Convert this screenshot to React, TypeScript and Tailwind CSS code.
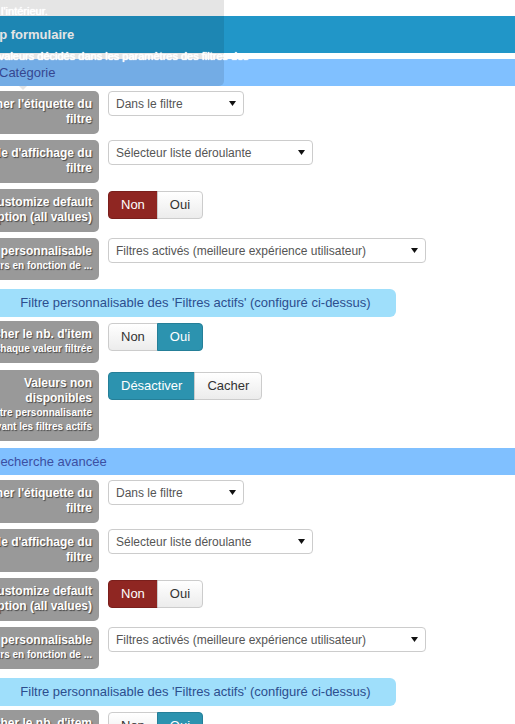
import type { ReactNode } from "react"

type Row =
  | { kind: "select"; lines: string[]; small?: string[]; value: string; width: string }
  | { kind: "toggle"; lines: string[]; small?: string[]; options: string[]; active: number; tone: "red" | "teal" }

const ROWS_TOP: Row[] = [
  { kind: "select", lines: ["Positionner l'étiquette du", "filtre"], value: "Dans le filtre", width: "w-[136px]" },
  { kind: "select", lines: ["Mode d'affichage du", "filtre"], value: "Sélecteur liste déroulante", width: "w-[205px]" },
  { kind: "toggle", lines: ["Customize default", "option (all values)"], options: ["Non", "Oui"], active: 0, tone: "red" },
  {
    kind: "select",
    lines: ["Filtre personnalisable"],
    small: ["Valeurs en fonction de ..."],
    value: "Filtres activés (meilleure expérience utilisateur)",
    width: "w-[318px]",
  },
]

const ROWS_BOTTOM: Row[] = [
  {
    kind: "toggle",
    lines: ["Afficher le nb. d'item"],
    small: ["pour chaque valeur filtrée"],
    options: ["Non", "Oui"],
    active: 1,
    tone: "teal",
  },
  {
    kind: "toggle",
    lines: ["Valeurs non", "disponibles"],
    small: ["Selon filtre personnalisante", "suivant les filtres actifs"],
    options: ["Désactiver", "Cacher"],
    active: 0,
    tone: "teal",
  },
]

const SECTIONS = [
  { title: "Catégorie", offset: "-ml-[1px]" },
  { title: "Recherche avancée", offset: "-ml-[9px]" },
]

function Label({ lines, small }: { lines: string[]; small?: string[] }) {
  return (
    <div className="-ml-[111px] w-[210px] shrink-0 rounded-[5px] bg-[#999999] pt-[6px] pr-[7px] pb-[7px] text-right font-bold whitespace-nowrap text-white [text-shadow:1px_1px_1px_rgba(0,0,0,0.55)]">
      {lines.map((l) => (
        <div key={l} className="text-[12px] leading-[15px]">
          {l}
        </div>
      ))}
      {small?.map((l) => (
        <div key={l} className="text-[10px] leading-[14px]">
          {l}
        </div>
      ))}
    </div>
  )
}

function Select({ value, width }: { value: string; width: string }) {
  return (
    <div
      className={`flex h-[25px] ${width} items-center justify-between rounded-[4px] border border-[#cccccc] bg-white pr-[7px] pl-[7px] text-[12px] text-[#555555]`}
    >
      <span>{value}</span>
      <svg width="7" height="5" viewBox="0 0 7 5">
        <path d="M0 0h7L3.5 5z" fill="#111" />
      </svg>
    </div>
  )
}

function Toggle({ options, active, tone }: { options: string[]; active: number; tone: "red" | "teal" }) {
  return (
    <div className="mt-[2px] flex text-[13px] leading-[18px]">
      {options.map((o, i) => {
        const on = i === active
        const color = on
          ? tone === "red"
            ? "border-[#7a1f1c] bg-[#8f2622] text-white"
            : "border-[#257f98] bg-[#2c93af] text-white"
          : "border-[#cccccc] bg-gradient-to-b from-white to-[#ececec] text-[#333333]"
        const shape = i === 0 ? "rounded-l-[4px]" : "-ml-px rounded-r-[4px]"
        return (
          <div key={o} className={`border px-[12px] py-[4px] ${color} ${shape}`}>
            {o}
          </div>
        )
      })}
    </div>
  )
}

function FieldRow({ row, gap }: { row: Row; gap: string }) {
  let control: ReactNode
  if (row.kind === "select") control = <Select value={row.value} width={row.width} />
  else control = <Toggle options={row.options} active={row.active} tone={row.tone} />
  return (
    <div className={`flex items-start gap-[9px] ${gap}`}>
      <Label lines={row.lines} small={row.small} />
      {control}
    </div>
  )
}

function Section({ title, offset }: { title: string; offset: string }) {
  return (
    <section>
      <div className="flex h-[27px] items-center bg-[#80c0ff] text-[13px] text-[#3c4fa2]">
        <span className={`${offset} whitespace-nowrap`}>{title}</span>
      </div>
      <div className="pt-[5px]">
        {ROWS_TOP.map((r) => (
          <FieldRow key={r.lines[0]} row={r} gap="mb-[6px]" />
        ))}
        <div className="mt-[9px] mb-[4px] -ml-[5px] flex h-[28px] w-[401px] items-center justify-center rounded-[6px] bg-[#9fdffb] text-[13px] text-[#2c4e8e]">
          Filtre personnalisable des 'Filtres actifs' (configuré ci-dessus)
        </div>
        <FieldRow row={ROWS_BOTTOM[0]} gap="mb-[7px]" />
        <FieldRow row={ROWS_BOTTOM[1]} gap="mb-[7px]" />
      </div>
    </section>
  )
}

export default function App() {
  return (
    <div className="relative h-[724px] w-[515px] overflow-hidden bg-white font-['Liberation_Sans',Arial,sans-serif]">
      <div className="pt-[16px]">
        <div className="flex h-[37px] items-center bg-[#2196c8] text-[13px] font-bold text-white">
          <span className="-ml-[29px] whitespace-nowrap">Setup formulaire</span>
        </div>
        <div className="h-[6px]" />
        {SECTIONS.map((s) => (
          <Section key={s.title} title={s.title} offset={s.offset} />
        ))}
      </div>

      {/* tooltip laid over the header */}
      <div className="absolute top-0 -left-[20px] h-[86px] w-[244px] rounded-br-[5px] bg-black/10 text-[11px] whitespace-nowrap text-white [text-shadow:0_0_1px_#ffffff,0_0_1px_#ffffff]">
        <div className="mt-[3px] -ml-[4px]">pour l'intérieur.</div>
        <div className="mt-[28px] -ml-[2px]">Les valeurs décidés dans les paramètres des filtres des</div>
        <div className="absolute -bottom-[4px] left-[39px] h-0 w-0 border-x-[4px] border-t-[4px] border-x-transparent border-t-black/10" />
      </div>
    </div>
  )
}
